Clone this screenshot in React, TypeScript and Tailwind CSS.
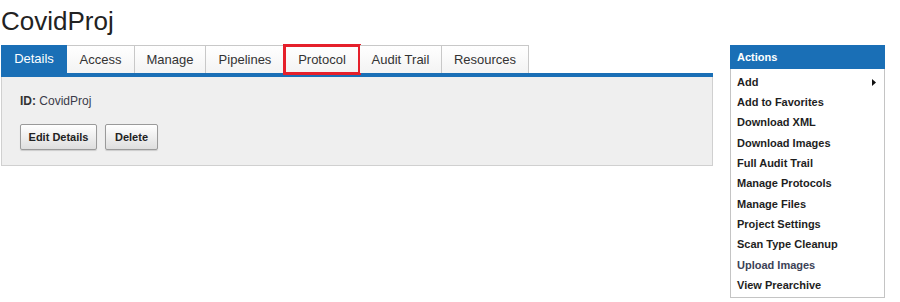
import React from "react";

const TABS: { label: string; width: number }[] = [
  { label: "Details", width: 66 },
  { label: "Access", width: 68 },
  { label: "Manage", width: 71 },
  { label: "Pipelines", width: 79 },
  { label: "Protocol", width: 75 },
  { label: "Audit Trail", width: 82 },
  { label: "Resources", width: 87 },
];

const ACTIONS = [
  "Add",
  "Add to Favorites",
  "Download XML",
  "Download Images",
  "Full Audit Trail",
  "Manage Protocols",
  "Manage Files",
  "Project Settings",
  "Scan Type Cleanup",
  "Upload Images",
  "View Prearchive",
];

export default function App() {
  return (
    <div className="flex h-[302px] w-[900px] bg-white pl-[1px] font-['Liberation_Sans',Arial,sans-serif]">
      {/* main column */}
      <div className="w-[712px]">
        <h1 className="mt-[6px] mb-[9px] text-[26px] leading-[30px] font-normal text-[#222]">CovidProj</h1>

        <div className="flex h-[28px]">
          {TABS.map((t, i) => {
            const active = i === 0;
            return (
              <div
                key={t.label}
                style={{ width: t.width }}
                className={
                  active
                    ? "relative flex items-center justify-center bg-[#1a6fb6] text-[13px] text-white"
                    : "relative flex items-center justify-center border border-b-0 border-l-0 border-[#c8c8c8] bg-gradient-to-b from-white to-[#f3f3f3] text-[13px] text-[#333]"
                }
              >
                {t.label}
                {t.label === "Protocol" && (
                  <span className="absolute top-[-2px] left-[-2px] h-[31px] w-[78px] border-[3px] border-[#e5202b]" />
                )}
              </div>
            );
          })}
        </div>
        <div className="h-[4px] bg-[#1a6fb6]" />

        <div className="h-[89px] border border-t-0 border-[#d0d0d0] bg-[#efefef] px-[18px] pt-[17px]">
          <div className="text-[12px] leading-[14px] text-[#333]">
            <span className="font-bold">ID:</span> <span className="text-[#3a3a4a]">CovidProj</span>
          </div>
          <div className="mt-[16px] flex gap-[8px]">
            <button className="h-[26px] w-[77px] rounded-[2px] border border-[#9a9a9a] bg-gradient-to-b from-white to-[#dedede] text-[11px] font-bold text-[#222] shadow-[0_1px_1px_rgba(0,0,0,0.15)]">
              Edit Details
            </button>
            <button className="h-[26px] w-[53px] rounded-[2px] border border-[#9a9a9a] bg-gradient-to-b from-white to-[#dedede] text-[11px] font-bold text-[#222] shadow-[0_1px_1px_rgba(0,0,0,0.15)]">
              Delete
            </button>
          </div>
        </div>
      </div>

      {/* actions box */}
      <div className="mt-[45px] ml-[17px] w-[155px] self-start">
        <div className="flex h-[24px] items-center bg-[#1a6fb6] px-[7px] text-[11px] font-bold text-white">Actions</div>
        <ul className="border border-t-0 border-[#c4c4c4] pt-[3px] pb-[2px]">
          {ACTIONS.map((a) => (
            <li
              key={a}
              className={
                "flex h-[20.3px] items-center justify-between pr-[8px] pl-[6px] text-[11px] font-bold " +
                (a === "Upload Images" ? "text-[#3c4256]" : "text-[#1e1e1e]")
              }
            >
              <span>{a}</span>
              {a === "Add" && (
                <svg width="4" height="7" viewBox="0 0 4 7">
                  <path d="M0 0 L4 3.5 L0 7 Z" fill="#111" />
                </svg>
              )}
            </li>
          ))}
        </ul>
      </div>
    </div>
  );
}
